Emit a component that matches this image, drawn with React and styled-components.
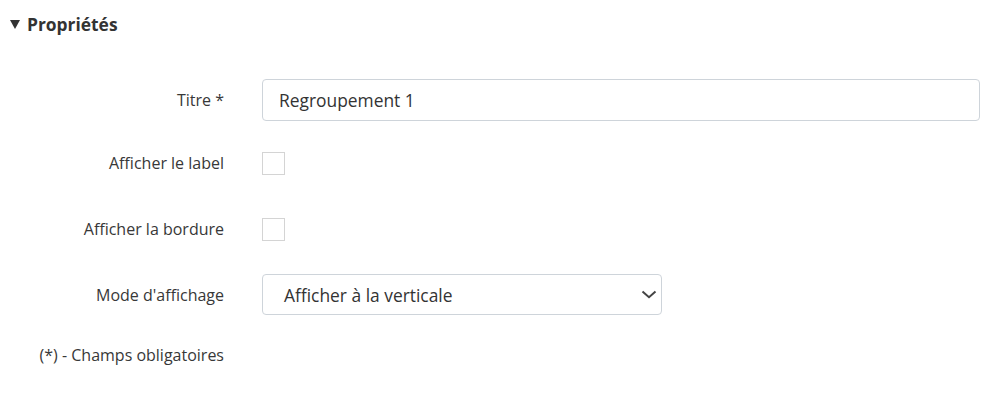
import React from 'react';
import styled, { createGlobalStyle } from 'styled-components';

const Global = createGlobalStyle`
  body {
    margin: 0;
    background: #fff;
    font-family: "Open Sans", "Liberation Sans", sans-serif;
    color: #333;
  }
`;

const Page = styled.div`
  width: 987px;
  height: 412px;
  box-sizing: border-box;
  padding: 12px 7px 0 10px;
`;

const Header = styled.div`
  display: flex;
  align-items: center;
  gap: 7px;
  height: 24px;
  font-size: 17.4px;
  font-weight: 700;
  color: #333;
`;

const Caret = styled.span`
  width: 0;
  height: 0;
  border-left: 5.5px solid transparent;
  border-right: 5.5px solid transparent;
  border-top: 9px solid #333;
  margin-top: 1px;
`;

const Form = styled.div`
  margin-top: 43px;
`;

const Row = styled.div`
  display: grid;
  grid-template-columns: 214px 1fr;
  column-gap: 38px;
  align-items: center;
  height: ${p => p.$h || 42}px;
  margin-bottom: ${p => p.$mb || 0}px;
`;

const Label = styled.label`
  text-align: right;
  font-size: 16px;
  color: #383838;
`;

const TextInput = styled.input`
  box-sizing: border-box;
  height: 42px;
  width: 100%;
  padding: 0 16px;
  border: 1px solid #ced4da;
  border-radius: 4px;
  font-family: inherit;
  font-size: 17.4px;
  color: #333;
  outline: none;
`;

const Check = styled.span`
  display: block;
  width: 21px;
  height: 21px;
  border: 1px solid #d4d4d4;
`;

const SelectBox = styled.div`
  box-sizing: border-box;
  width: 400px;
  height: 41px;
  padding: 0 4px 0 21px;
  border: 1px solid #ced4da;
  border-radius: 4px;
  display: flex;
  align-items: center;
  justify-content: space-between;
  font-size: 17.4px;
  color: #333;
`;

export default function App() {
  return (
    <>
      <Global />
      <Page>
        <Header>
          <Caret />
          Propriétés
        </Header>
        <Form>
          <Row $mb={21}>
            <Label>Titre *</Label>
            <TextInput defaultValue="Regroupement 1" />
          </Row>
          <Row $mb={24}>
            <Label>Afficher le label</Label>
            <Check />
          </Row>
          <Row $mb={24}>
            <Label>Afficher la bordure</Label>
            <Check />
          </Row>
          <Row $h={41}>
            <Label>Mode d'affichage</Label>
            <SelectBox>
              Afficher à la verticale
              <svg width="16" height="9" viewBox="0 0 16 9" fill="none">
                <path d="M1.5 1.5 L8 7.2 L14.5 1.5" stroke="#444" strokeWidth="2" />
              </svg>
            </SelectBox>
          </Row>
          <Footer>(*) - Champs obligatoires</Footer>
        </Form>
      </Page>
    </>
  );
}

const Footer = styled.div`
  width: 214px;
  text-align: right;
  font-size: 16px;
  color: #383838;
  margin-top: 29px;
`;
